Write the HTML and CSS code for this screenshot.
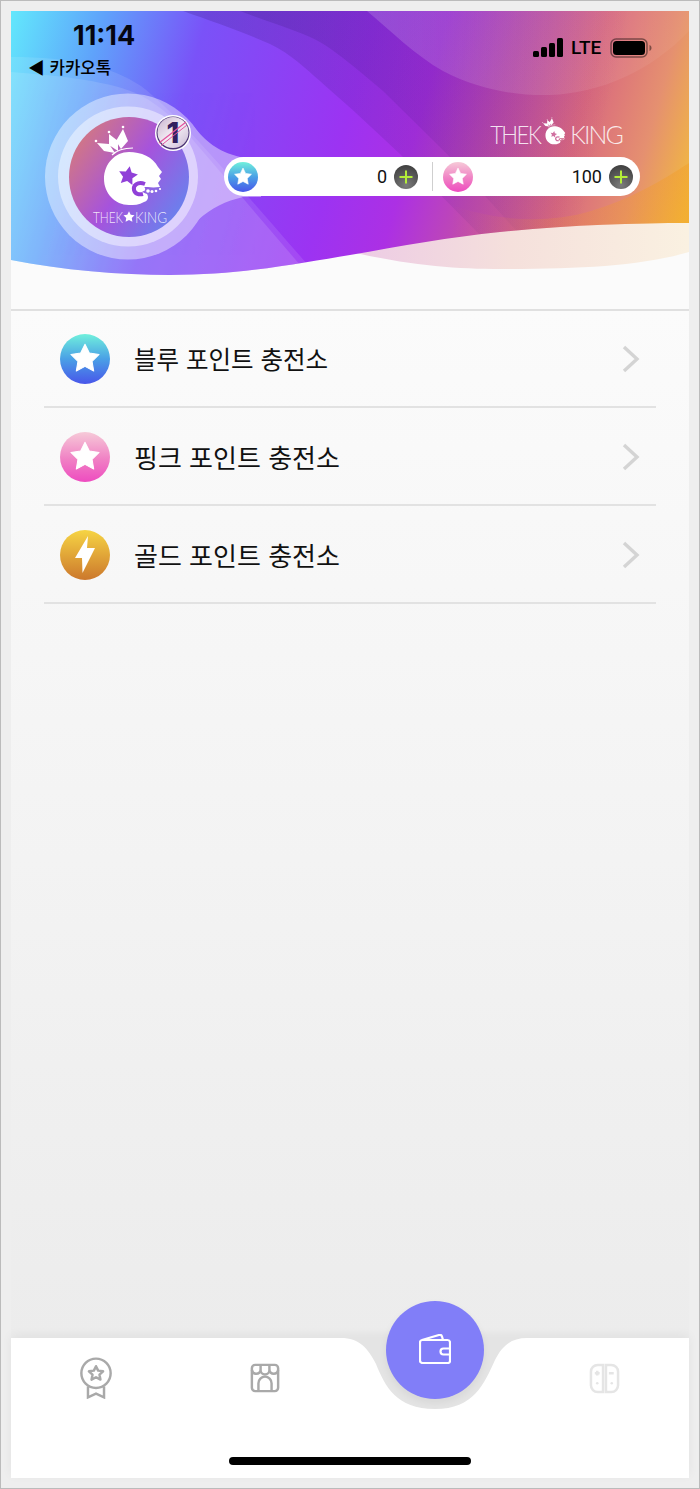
FILE: index.html
```html
<!DOCTYPE html>
<html lang="ko">
<head>
<meta charset="utf-8">
<title>THEK KING</title>
<link rel="stylesheet" href="styles.css">
</head>
<body>
<svg class="sprite" aria-hidden="true">
  <defs>
    <linearGradient id="gMain" gradientUnits="userSpaceOnUse" x1="0" y1="0" x2="678" y2="190">
      <stop offset="0" stop-color="#62e8fc"/><stop offset=".13" stop-color="#5fa2fb"/><stop offset=".27" stop-color="#7a52f8"/>
      <stop offset=".5" stop-color="#9c33f2"/><stop offset=".6" stop-color="#ac30e4"/><stop offset=".7" stop-color="#c04ab0"/>
      <stop offset=".82" stop-color="#d9687f"/><stop offset=".92" stop-color="#e59070"/><stop offset="1" stop-color="#f2bb3e"/>
    </linearGradient>
    <linearGradient id="gDark" gradientUnits="userSpaceOnUse" x1="170" y1="0" x2="600" y2="100">
      <stop offset="0" stop-color="#32146e" stop-opacity=".32"/><stop offset=".6" stop-color="#32146e" stop-opacity=".16"/><stop offset="1" stop-color="#32146e" stop-opacity="0"/>
    </linearGradient>
    <linearGradient id="gOrange" gradientUnits="userSpaceOnUse" x1="440" y1="0" x2="678" y2="0">
      <stop offset="0" stop-color="#f39a20" stop-opacity="0"/><stop offset="1" stop-color="#f39a20" stop-opacity=".38"/>
    </linearGradient>
    <linearGradient id="gBlob" gradientUnits="userSpaceOnUse" x1="356" y1="0" x2="678" y2="0">
      <stop offset="0" stop-color="#fff" stop-opacity=".16"/><stop offset="1" stop-color="#fff" stop-opacity=".04"/>
    </linearGradient>
    <linearGradient id="gPale" x1="0" y1="0" x2="1" y2="0">
      <stop offset="0" stop-color="#ebc8e6"/><stop offset=".5" stop-color="#f5e0dc"/><stop offset="1" stop-color="#faf1e1"/>
    </linearGradient>
    <linearGradient id="gAvatar" x1="0" y1="0.15" x2="1" y2="0.85">
      <stop offset="0" stop-color="#d87c78"/><stop offset=".5" stop-color="#a653dc"/><stop offset="1" stop-color="#6088f0"/>
    </linearGradient>
    <linearGradient id="gBadge" x1="0" y1="0" x2="1" y2="1">
      <stop offset="0" stop-color="#c9b2cd"/><stop offset=".5" stop-color="#f3ecf4"/><stop offset="1" stop-color="#c8b8d4"/>
    </linearGradient>
    <linearGradient id="gBlue" x1="0" y1="0" x2="0" y2="1">
      <stop offset="0" stop-color="#70f0dc"/><stop offset=".5" stop-color="#4aa0e6"/><stop offset="1" stop-color="#4856ea"/>
    </linearGradient>
    <linearGradient id="gPink" x1="0" y1="0" x2="0" y2="1">
      <stop offset="0" stop-color="#f6cad8"/><stop offset=".55" stop-color="#f080c4"/><stop offset="1" stop-color="#ee4cc0"/>
    </linearGradient>
    <linearGradient id="gGold" x1="0" y1="0" x2="0" y2="1">
      <stop offset="0" stop-color="#f6d444"/><stop offset="1" stop-color="#cc782c"/>
    </linearGradient>
    <radialGradient id="gPlus" cx=".5" cy=".85" r=".9">
      <stop offset="0" stop-color="#7c7c7c"/><stop offset="1" stop-color="#3c3c3c"/>
    </radialGradient>
    <polygon id="star" points="0,-10 2.94,-4.05 9.51,-3.09 4.76,1.55 5.88,8.09 0,5 -5.88,8.09 -4.76,1.55 -9.51,-3.09 -2.94,-4.05"/>
    <symbol id="plus" viewBox="0 0 24 24">
      <circle cx="12" cy="12" r="12" fill="url(#gPlus)"/>
      <path d="M12 5.5v13M5.5 12h13" stroke="#b4ee38" stroke-width="2" fill="none"/>
    </symbol>
    <symbol id="coinBlue" viewBox="-25 -25 50 50">
      <circle r="25" fill="url(#gBlue)"/>
      <use href="#star" transform="scale(1.48)" fill="#fff" stroke="#fff" stroke-width=".7" stroke-linejoin="round"/>
    </symbol>
    <symbol id="coinPink" viewBox="-25 -25 50 50">
      <circle r="25" fill="url(#gPink)"/>
      <use href="#star" transform="scale(1.48)" fill="#fff" stroke="#fff" stroke-width=".7" stroke-linejoin="round"/>
    </symbol>
    <g id="kingMark">
      <path fill="#fff" d="M54 12L59 24L52 32L47 24ZM40 17L49 24L49 34L40 28ZM28 26L40 27L46 36L35 34Z"/>
      <circle cx="54" cy="10" r="1.300" fill="#fff"/><circle cx="40" cy="15" r="1.300" fill="#fff"/><circle cx="27" cy="24" r="1.300" fill="#fff"/>
      <path d="M43 38C48 33 56 31 64 31" fill="none" stroke="#fff" stroke-width="1.200"/>
      <path fill="#fff" d="M60 35C72 35 84 40 89 50L93 55L90 59L92 62L89 66L91 70C84 71 78 70 74 70C72 74 74 76 78 77C80 80 79 84 75 85C70 88 65 88 60 88C46 88 35 76 35 62C35 47 46 35 60 35Z"/>
      <use href="#star" transform="translate(59 59) rotate(10)" fill="currentColor"/>
      <path d="M76 67C68 64 64 69 65 73C66 77 70 78 74 77" fill="none" stroke="currentColor" stroke-width="4"/>
      <g fill="#fff"><circle cx="74" cy="72" r="2.200"/><circle cx="79" cy="74" r="1.800"/><circle cx="83" cy="74.500" r="1.500"/><circle cx="87" cy="74" r="1.300"/><circle cx="91" cy="72" r="1.100"/></g>
    </g>
  </defs>
</svg>

<div class="app">
  <header class="hero">
    <svg class="hero-bg" viewBox="0 0 678 299" aria-hidden="true">
      <path fill="url(#gPale)" d="M320 236C390 254 440 258 490 258C570 258 630 255 678 241V200H320Z"/>
      <clipPath id="clipWave"><path d="M0 249C50 259 110 264 159 264C230 264 290 252 339 244C390 235 440 226 489 221C560 214 620 212 678 212V0H0Z"/></clipPath>
      <g clip-path="url(#clipWave)">
        <rect width="678" height="299" fill="url(#gMain)"/>
        <path fill="url(#gDark)" opacity=".7" d="M172 0C200 10 235 22 259 33C280 43 295 58 309 70C320 80 335 93 346 103L389 143L470 225H678V0Z"/>
        <path fill="url(#gDark)" opacity=".7" d="M229 0C250 8 272 15 292 23C310 30 320 38 332 47C345 57 360 70 372 80L436 143L510 225H678V0Z"/>
        <path fill="url(#gBlob)" d="M356 0C380 20 405 45 432 60C470 80 510 85 539 84C590 82 640 60 678 20V0Z"/>
        <path fill="url(#gOrange)" d="M400 175C450 205 520 218 580 200C620 188 650 170 678 152V240H400Z"/>
        <path fill="#fff" opacity=".1" d="M0 46C60 46 100 55 130 75C170 105 240 190 320 280H0Z"/>
        <path fill="#fff" opacity=".12" d="M0 61C50 65 100 70 129 84C150 95 165 110 176 122L290 255L200 280H0Z"/>
        <g fill="#fff" opacity=".42">
          <circle cx="117" cy="165.500" r="83"/>
          <path d="M183 116C195 130 205 140 229 146H250V186H232C215 190 200 197 187 209L150 190Z"/>
        </g>
        <circle cx="117" cy="165.500" r="70" fill="#fff" opacity=".45"/>
      </g>
    </svg>

    <div class="status">
      <div class="status-left">
        <div class="time">11:14</div>
        <div class="back">◀ 카카오톡</div>
      </div>
      <div class="sys">
        <svg class="signal" viewBox="0 0 30 20" aria-hidden="true">
          <rect x="0" y="13" width="6" height="6" rx="1.500"/><rect x="8" y="9" width="6" height="10" rx="1.500"/>
          <rect x="16" y="5" width="6" height="14" rx="1.500"/><rect x="24" y="0" width="6" height="19" rx="1.500"/>
        </svg>
        <span class="lte">LTE</span>
        <svg class="battery" viewBox="0 0 42 20" aria-hidden="true">
          <rect x="1" y="1" width="36" height="18" rx="5" fill="none" stroke="#000" stroke-opacity=".45" stroke-width="1.500"/>
          <rect x="3" y="3" width="32" height="14" rx="3.500" fill="#000"/>
          <path d="M39.500 7v6c1.200-.4 2-1.600 2-3s-.8-2.600-2-3Z" fill="#000" fill-opacity=".45"/>
        </svg>
      </div>
    </div>

    <div class="hero-body">
      <svg class="avatar" viewBox="0 0 120 120" aria-hidden="true">
        <circle cx="60" cy="60" r="60" fill="url(#gAvatar)"/>
        <use href="#kingMark" class="mark-purple"/>
        <text class="avatar-text" x="24" y="106" textLength="30" lengthAdjust="spacingAndGlyphs">THEK</text>
        <use href="#star" transform="translate(60 100) scale(.58)" fill="#fff"/>
        <text class="avatar-text" x="66" y="106" textLength="32" lengthAdjust="spacingAndGlyphs">KING</text>
        <circle cx="104" cy="16" r="18" fill="#fff"/>
        <circle cx="104" cy="16" r="16.500" fill="#4a3373"/>
        <circle cx="104" cy="15.500" r="15.500" fill="url(#gBadge)"/>
        <text class="badge-num" x="104" y="26" text-anchor="middle">1</text>
        <path d="M90 26L117 5" stroke="#e2559e" stroke-width="1.300"/><path d="M92 28.500L118 8" stroke="#e2559e" stroke-width="1"/>
      </svg>
      <div class="hero-side">
        <div class="brand">
          <span class="brand-thek">THEK</span>
          <svg class="brand-mark" viewBox="25 8 70 82" aria-hidden="true"><use href="#kingMark"/></svg>
          <span>KING</span>
        </div>
        <div class="pill">
          <div class="seg">
            <svg class="coin"><use href="#coinBlue"/></svg>
            <span class="amount">0</span>
            <svg class="plus"><use href="#plus"/></svg>
          </div>
          <i class="divider"></i>
          <div class="seg">
            <svg class="coin"><use href="#coinPink"/></svg>
            <span class="amount">100</span>
            <svg class="plus"><use href="#plus"/></svg>
          </div>
        </div>
      </div>
    </div>
  </header>

  <main class="main">
    <ul class="list">
      <li class="row">
        <svg class="row-icon"><use href="#coinBlue"/></svg>
        <span class="row-label row-label-tight">블루 포인트 충전소</span>
        <svg class="chev" viewBox="0 0 18 28" aria-hidden="true"><path d="M2 2l13 12L2 26"/></svg>
      </li>
      <li class="row">
        <svg class="row-icon"><use href="#coinPink"/></svg>
        <span class="row-label">핑크 포인트 충전소</span>
        <svg class="chev" viewBox="0 0 18 28" aria-hidden="true"><path d="M2 2l13 12L2 26"/></svg>
      </li>
      <li class="row">
        <svg class="row-icon" viewBox="-25 -25 50 50" aria-hidden="true">
          <circle r="25" fill="url(#gGold)"/>
          <polygon fill="#fff" points="3,-19 -10,3 -3,3 -2.500,18 10,-7 2,-7"/>
        </svg>
        <span class="row-label">골드 포인트 충전소</span>
        <svg class="chev" viewBox="0 0 18 28" aria-hidden="true"><path d="M2 2l13 12L2 26"/></svg>
      </li>
    </ul>
  </main>

  <nav class="tabbar">
    <svg class="tab-bg" viewBox="0 0 678 140" aria-hidden="true">
      <path fill="#fff" d="M330 0C348 0 357 10 365 26C374 48 385 71 424 71C463 71 473 46 484 22C491 8 500 0 516 0H678V140H0V0Z"/>
    </svg>
    <div class="tabs">
      <div class="tab">
        <svg class="tab-icon" viewBox="0 0 36 44" aria-hidden="true">
          <circle cx="18" cy="17" r="15.500"/>
          <path d="M18 9.500l2.300 4.700 5.200.7-3.800 3.600 1 5.200-4.700-2.500-4.700 2.500 1-5.200-3.800-3.600 5.200-.7Z" stroke-linejoin="round"/>
          <path d="M9.500 31v11.500L18 38.500l8.500 4V31"/>
        </svg>
      </div>
      <div class="tab">
        <svg class="tab-icon shop" viewBox="0 0 32 32" aria-hidden="true">
          <rect x="2" y="2" width="28" height="28" rx="3.500"/>
          <path d="M2 7.500a4.700 4.700 0 0 0 9.300 0a4.700 4.700 0 0 0 9.400 0a4.700 4.700 0 0 0 9.300 0"/>
          <path d="M11.300 3v4.500M20.700 3v4.500"/>
          <path d="M9 30V21.500a7 7 0 0 1 14 0V30"/>
        </svg>
      </div>
      <div class="tab tab-fab-cell">
        <button class="fab" type="button" aria-label="wallet">
          <svg class="wallet" viewBox="0 0 32 30" aria-hidden="true">
            <path d="M1 8.500C1 7 2 6 3.500 6H28.500C30 6 31 7 31 8.500V27C31 28.300 30 29 28.800 29H3.500C2 29 1 28 1 26.500Z"/>
            <path d="M3 6L20 1C21.500.6 22.600 1.200 23 2.500L24 6"/>
            <path d="M31 14.500H24.500a3 3 0 0 0 0 6H31"/>
          </svg>
        </button>
      </div>
      <div class="tab">
        <svg class="tab-icon switch" viewBox="0 0 32 32" aria-hidden="true">
          <path d="M14.500 2H9A7 7 0 0 0 2 9V23A7 7 0 0 0 9 30H14.500Z"/>
          <path d="M17.500 2H23A7 7 0 0 1 30 9V23A7 7 0 0 1 23 30H17.500Z"/>
          <path d="M6 10.500h5M8.500 8v5M20.500 10.500h5"/>
          <circle class="dot" cx="8.500" cy="21" r="1.300"/><circle class="dot" cx="23.500" cy="21" r="1.300"/>
        </svg>
      </div>
    </div>
    <div class="home"></div>
  </nav>
</div>
</body>
</html>
```

FILE: styles.css
```css
* { box-sizing: border-box; }
html, body { margin: 0; padding: 0; }
body {
  width: 700px;
  height: 1489px;
  padding: 10px;
  background: #eeeeee;
  border: 1px solid #bbbbbb;
  font-family: "Noto Sans CJK KR", "Noto Sans", sans-serif;
  color: #111;
  overflow: hidden;
}
.sprite { position: absolute; width: 0; height: 0; }

.app {
  height: 1467px;
  display: flex;
  flex-direction: column;
  background: #fbfbfb;
}

/* hero */
.hero {
  position: relative;
  height: 300px;
  flex: none;
  border-bottom: 2px solid #e0e0e0;
  background: #fbfbfb;
}
.hero-bg { position: absolute; left: 0; top: 0; width: 678px; height: 299px; }

.status {
  position: relative;
  height: 106px;
  display: flex;
  justify-content: space-between;
  padding: 10px 37px 0 17px;
}
.time {
  font-family: Inter, sans-serif;
  font-weight: 700;
  font-size: 27px;
  line-height: 30px;
  margin-left: 45px;
  color: #050510;
}
.back {
  font-size: 16.8px;
  line-height: 22px;
  margin-top: 5px;
  font-weight: 500;
  color: #000;
}
.sys {
  display: flex;
  align-items: center;
  height: 20px;
  margin-top: 17px;
}
.signal { width: 30px; height: 20px; fill: #000; }
.lte {
  font-family: Roboto, sans-serif;
  font-weight: 500;
  font-size: 19px;
  line-height: 20px;
  margin-left: 8px;
  width: 31px;
  color: #000;
}
.battery { width: 42px; height: 20px; margin-left: 8px; }

.hero-body {
  position: relative;
  display: flex;
  gap: 35px;
  padding-left: 58px;
}
.avatar { width: 120px; height: 120px; overflow: visible; flex: none; }
.mark-purple { color: #9040d8; }
.avatar-text {
  font-family: Lato, sans-serif;
  font-weight: 300;
  font-size: 15px;
  fill: #fff;
  fill-opacity: .85;
}
.badge-num {
  font-family: Inter, sans-serif;
  font-weight: 800;
  font-size: 29px;
  fill: #33205f;
}

.hero-side {
  width: 416px;
  display: flex;
  flex-direction: column;
  align-items: flex-end;
}
.brand {
  display: flex;
  align-items: flex-end;
  height: 34px;
  padding: 0 18px 6px 0;
  gap: 2px;
  font-family: Lato, sans-serif;
  font-weight: 300;
  font-size: 25px;
  line-height: 22px;
  letter-spacing: -1.9px;
  color: rgba(255, 255, 255, .85);
}
.brand-thek { transform: scaleX(.89); transform-origin: right center; }
.brand-mark { width: 24px; height: 28px; overflow: visible; color: #d070a0; margin-right: 2px; }

.pill {
  width: 416px;
  height: 39px;
  margin-top: 6px;
  display: flex;
  align-items: center;
  padding-left: 4px;
  background: #fff;
  border-radius: 20px;
}
.seg {
  width: 190px;
  display: flex;
  align-items: center;
}
.coin { width: 30px; height: 30px; flex: none; }
.amount {
  margin-left: auto;
  margin-right: 7px;
  font-family: Roboto, sans-serif;
  font-size: 18px;
  line-height: 24px;
  color: #111;
}
.plus { width: 24px; height: 24px; flex: none; }
.divider {
  width: 1px;
  height: 29px;
  margin: 0 10px 0 14px;
  background: #cfcfcf;
}

/* list */
.main {
  flex: 1;
  background: linear-gradient(#fbfbfb, #ececec);
}
.list { list-style: none; margin: 0 33px; padding: 0; }
.row {
  height: 98px;
  display: flex;
  align-items: center;
  padding: 2px 16px 0;
  border-bottom: 2px solid #e2e2e2;
}
.row:first-child { height: 97px; padding-top: 0; }
.row-icon { width: 50px; height: 50px; flex: none; }
.row-label {
  margin-left: 24px;
  font-size: 26px;
  line-height: 34px;
  color: #111;
}
.row-label-tight { font-size: 24.5px; }
.chev {
  margin-left: auto;
  width: 18px;
  height: 28px;
  fill: none;
  stroke: #d4d4d4;
  stroke-width: 3.4;
}

/* tab bar */
.tabbar {
  position: relative;
  height: 140px;
  flex: none;
  background: #e4e4e4;
  box-shadow: 0 -3px 10px rgba(0, 0, 0, .05);
}
.tab-bg { position: absolute; left: 0; top: 0; width: 678px; height: 140px; }
.tabs {
  position: relative;
  display: grid;
  grid-template-columns: repeat(4, 1fr);
  height: 119px;
  align-items: start;
}
.tab {
  height: 80px;
  display: flex;
  align-items: center;
  justify-content: center;
  position: relative;
}
.tab-icon {
  width: 34px;
  height: 42px;
  fill: none;
  stroke: #a9a9a9;
  stroke-width: 2.6;
}
.shop { width: 30px; height: 30px; }
.switch { width: 31px; height: 31px; stroke: #e5e5e5; stroke-width: 2.6; }
.dot { fill: #e5e5e5; stroke: none; }
.fab {
  position: absolute;
  left: 36px;
  top: -37px;
  width: 98px;
  height: 98px;
  padding: 0;
  border: 0;
  border-radius: 50%;
  background: #817ef8;
  box-shadow: 0 4px 8px rgba(0, 0, 0, .06);
  display: flex;
  align-items: center;
  justify-content: center;
}
.wallet {
  width: 32px;
  height: 30px;
  fill: none;
  stroke: #fff;
  stroke-width: 2.2;
  stroke-linejoin: round;
  margin-bottom: 2px;
}
.home {
  position: relative;
  width: 242px;
  height: 8px;
  margin: 0 auto;
  border-radius: 4px;
  background: #000;
}
```
